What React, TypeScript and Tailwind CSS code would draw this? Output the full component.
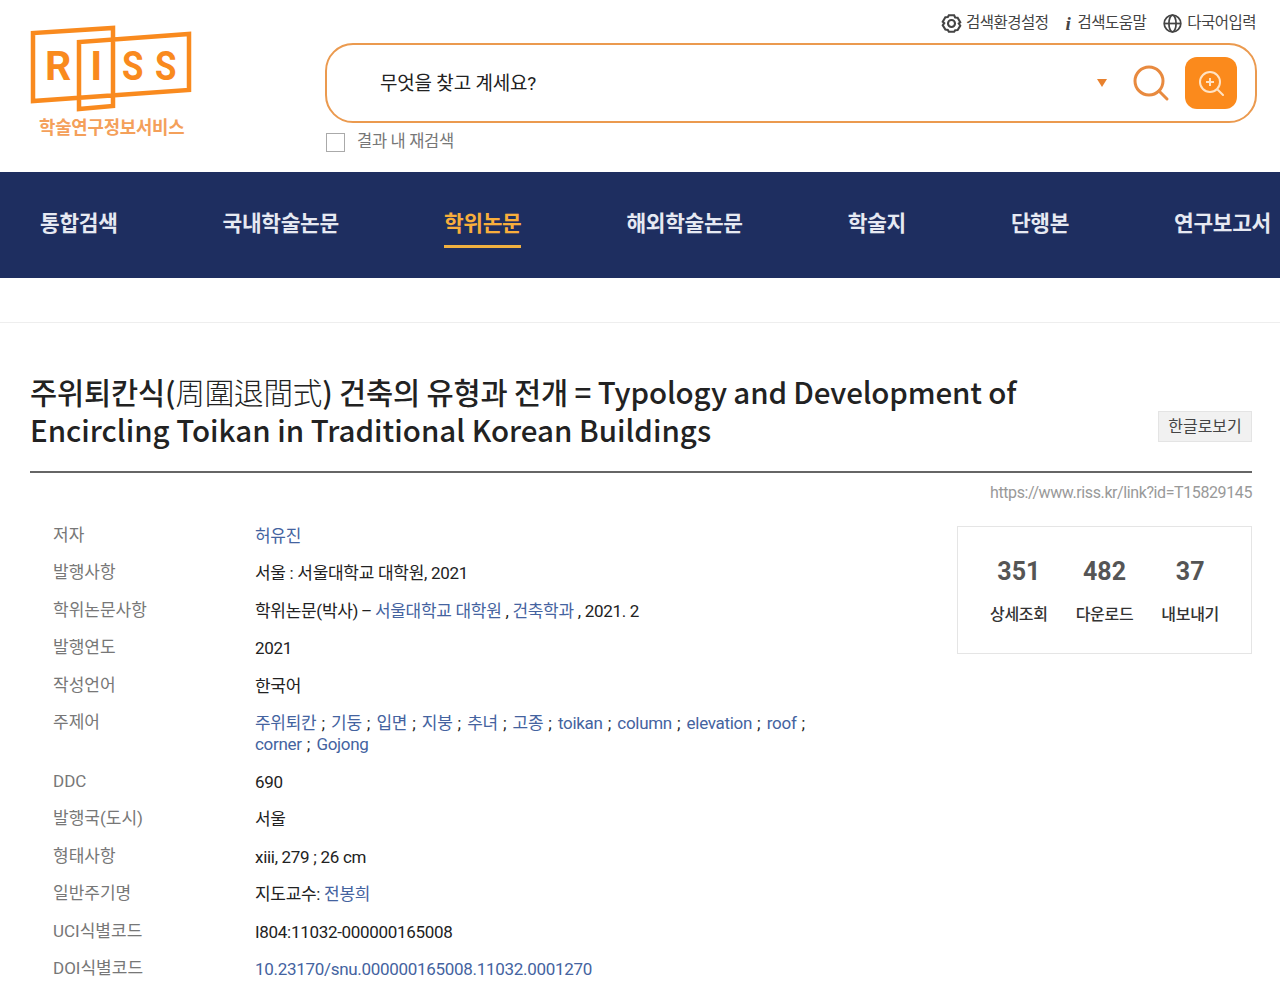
const kr = "font-['Roboto','Noto_Sans_CJK_KR',sans-serif]";

const Link = ({ children }: { children: React.ReactNode }) => <span className="text-[#44639f]">{children}</span>;
const Sep = () => <span className="text-[#222] ml-[5px] mr-[6.4px]">;</span>;

function Row({ label, children, h = "h-[37.4px]" }: { label: string; children: React.ReactNode; h?: string }) {
  return (
    <div className={`flex ${h}`}>
      <div className="w-[225px] pl-[23px] text-[#777] leading-[24px] -mt-px">{label}</div>
      <div className="flex-1 text-[#222] leading-[21px] pt-[2px] tracking-[-0.3px]">{children}</div>
    </div>
  );
}

function Logo() {
  return (
    <div className="w-[162px] shrink-0 ml-[30px] mt-[25px] relative h-[115px]">
      <svg width="162" height="88" viewBox="0 0 162 88" fill="none" stroke="#f98a1e" strokeWidth="4.5">
        <path d="M83 17 L83 3 L3 8 L3 76 L159 65 L159 9 L49 17 L49 84 L83 81 L83 17" />
      </svg>
      <div className="absolute top-[16px] left-0 w-full flex text-[#f98a1e] font-['Roboto'] font-bold text-[41px] leading-[50px] whitespace-nowrap">
        <span className="ml-[15px]">R</span>
        <span className="ml-[19px]">I</span>
        <span className="ml-[20px] scale-x-[0.85] origin-left">S</span>
        <span className="ml-[7px] scale-x-[0.85] origin-left">S</span>
      </div>
      <div className="absolute top-[92px] left-[9px] text-[#f4a05a] font-bold text-[17.8px] leading-[22px] tracking-[-0.2px] whitespace-nowrap">학술연구정보서비스</div>
    </div>
  );
}

export default function App() {
  const nav = ["통합검색", "국내학술논문", "학위논문", "해외학술논문", "학술지", "단행본", "연구보고서"];
  return (
    <div className={`${kr} w-[1280px] h-[992px] overflow-hidden bg-white text-[17px]`}>
      <header className="flex h-[172px]">
        <Logo />
        <div className="ml-[133px] w-[932px] relative">
          <div className="flex justify-end items-center gap-[17px] h-[44px] pt-[3px] pr-[1px] text-[#444] text-[15.5px] tracking-[-0.5px]">
            <span className="flex items-center gap-[4px]">
              <svg width="21" height="21" viewBox="0 0 24 24" fill="none" stroke="#444" strokeWidth="2.4"><path d="M9 2.500h6l1.200 2.600 2.800.3 3 5.100-1.700 1.500 1.700 2.500-3 5-2.800.3L15 21.500H9l-1.200-2.200-2.800-.3-3-5 1.700-2.500-1.700-1.500 3-5.100 2.800-.3z"/><circle cx="12" cy="12" r="4"/></svg>
              검색환경설정
            </span>
            <span className="flex items-center gap-[7px]">
              <span className="font-['Liberation_Serif'] italic font-bold text-[19px] leading-none text-[#444]">i</span>
              검색도움말
            </span>
            <span className="flex items-center gap-[5px]">
              <svg width="19" height="19" viewBox="0 0 24 24" fill="none" stroke="#444" strokeWidth="2.2"><circle cx="12" cy="12" r="10.500"/><ellipse cx="12" cy="12" rx="4.500" ry="10.500"/><path d="M1.500 12h21"/></svg>
              다국어입력
            </span>
          </div>
          <div className="h-[80px] -mt-px border-2 border-[#eb9a4f] rounded-[28px] flex items-center pl-[53px] pr-[18px]">
            <span className="text-[#222] text-[19px] tracking-[-0.2px] flex-1 pt-[2px]">무엇을 찾고 계세요?</span>
            <span className="w-0 h-0 border-l-[5.500px] border-r-[5.500px] border-t-[8px] border-l-transparent border-r-transparent border-t-[#e8812e] mr-[25px]"></span>
            <svg width="38" height="38" viewBox="0 0 38 38" fill="none" stroke="#e88a3f" strokeWidth="3" className="mr-[15px]"><circle cx="17" cy="17" r="14"/><path d="M27 27 L35 35" strokeLinecap="round"/></svg>
            <span className="w-[52px] h-[52px] rounded-[12px] bg-[#fb8a1c] flex items-center justify-center">
              <svg width="26" height="26" viewBox="0 0 26 26" fill="none" stroke="#ffe3c4" strokeWidth="2"><circle cx="12" cy="12" r="10"/><path d="M12 8v8M8 12h8"/><path d="M20 20l5 5" strokeLinecap="round"/></svg>
            </span>
          </div>
          <div className="flex items-center mt-[7px]">
            <span className="w-[19px] h-[19px] ml-px border border-[#aaa] bg-white"></span>
            <span className="ml-[12px] text-[#777] text-[16.5px] tracking-[-0.3px]">결과 내 재검색</span>
          </div>
        </div>
      </header>

      <nav className="h-[106px] bg-[#1e2e60] flex items-center justify-between pl-[40px] pr-[9px] font-bold text-[21.4px] tracking-[-0.3px] whitespace-nowrap">
        {nav.map((n, i) => (
          <span key={n} className={i === 2 ? "text-[#f8ae3c] border-b-[3px] border-[#f0b040] h-[45px] leading-[42px]" : "leading-[42px] h-[45px] text-[#e6e9f2]"}>{n}</span>
        ))}
      </nav>

      <div className="h-[45px] border-b border-[#eee]"></div>

      <main className="pl-[30px] pr-[28px]">
        <div className="relative h-[150px] border-b-2 border-[#666]">
          <h1 className="pt-[49px] text-[29.5px] leading-[38px] font-medium text-[#222] font-['Noto_Sans_CJK_KR',sans-serif] w-[1020px]">
            <span className="tracking-[-0.14px]">주위퇴칸식(<span className="font-light">周圍退間式</span>) 건축의 유형과 전개 = Typology and Development of</span> Encircling Toikan in Traditional Korean Buildings
          </h1>
          <span className="absolute right-0 top-[88px] w-[94px] h-[31px] bg-[#f1f1f1] border border-[#e4e4e4] flex items-center justify-center text-[16px] text-[#444]">한글로보기</span>
        </div>
        <div className="text-right text-[#999] text-[16px] leading-[20px] pt-[10px] tracking-[-0.4px]">https://www.riss.kr/link?id=T15829145</div>

        <div className="flex mt-[21px]">
          <div className="w-[927px]">
            <Row label="저자"><Link>허유진</Link></Row>
            <Row label="발행사항">서울 : 서울대학교 대학원, 2021</Row>
            <Row label="학위논문사항">학위논문(박사) <span className="-mx-px">–</span> <Link>서울대학교 대학원</Link> , <Link>건축학과</Link> , 2021. 2</Row>
            <Row label="발행연도">2021</Row>
            <Row label="작성언어">한국어</Row>
            <Row label="주제어" h="h-[59px]">
              <Link>주위퇴칸</Link><Sep /><Link>기둥</Link><Sep /><Link>입면</Link><Sep /><Link>지붕</Link><Sep /><Link>추녀</Link><Sep /><Link>고종</Link><Sep /><Link>toikan</Link><Sep /><Link>column</Link><Sep /><Link>elevation</Link><Sep /><Link>roof</Link><Sep /><br />
              <Link>corner</Link><Sep /><Link>Gojong</Link>
            </Row>
            <Row label="DDC">690</Row>
            <Row label="발행국(도시)">서울</Row>
            <Row label="형태사항">xiii, 279 ; 26 cm</Row>
            <Row label="일반주기명">지도교수: <Link>전봉희</Link></Row>
            <Row label="UCI식별코드">I804:11032-000000165008</Row>
            <Row label="DOI식별코드"><Link>10.23170/snu.000000165008.11032.0001270</Link></Row>
          </div>
          <div className="w-[295px] h-[128px] border border-[#e5e5e5] mt-[2px] grid grid-cols-3 px-[18px] pt-[27px]">
            {[["351", "상세조회"], ["482", "다운로드"], ["37", "내보내기"]].map(([a, b]) => (
              <div key={b} className="flex flex-col items-center">
                <span className="text-[25px] leading-[36px] font-bold text-[#555]">{a}</span>
                <span className="text-[16px] leading-[22px] mt-[14px] font-medium text-[#333] tracking-[-0.3px] whitespace-nowrap">{b}</span>
              </div>
            ))}
          </div>
        </div>
      </main>
    </div>
  );
}
